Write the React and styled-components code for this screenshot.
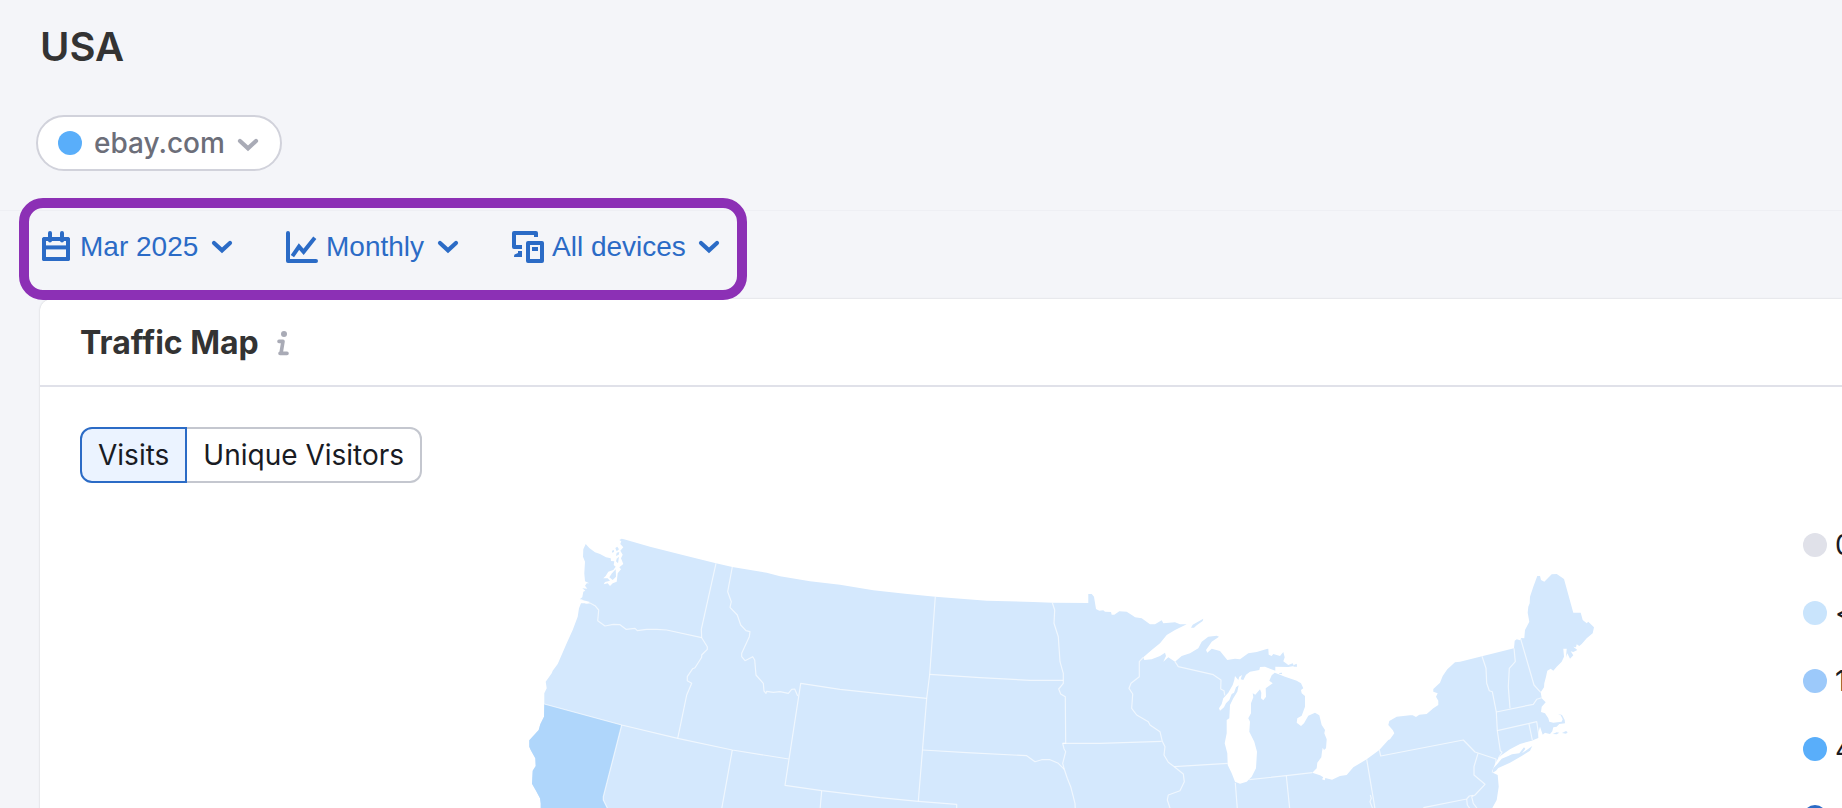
import React from "react";
import styled, { createGlobalStyle, css } from "styled-components";

const color = {
  page: "#f4f5f9",
  card: "#ffffff",
  ink: "#333333",
  text: "#191b23",
  muted: "#6c6e79",
  faint: "#a9abb6",
  link: "#2b6bc6",
  line: "#e0e1e9",
  highlight: "#8c30b5",
  land: "#d4e8fd",
  landStrong: "#afd6fb",
};

const GlobalStyle = createGlobalStyle`
  *, *::before, *::after { box-sizing: border-box; }
  body {
    margin: 0;
    background: ${color.page};
    color: ${color.text};
    font-family: Inter, "Liberation Sans", sans-serif;
    font-size: 28px;
  }
`;

const Page = styled.div`
  height: 100vh;
  overflow: hidden;
  display: flex;
  flex-direction: column;
`;

const Header = styled.header`
  display: flex;
  flex-direction: column;
  align-items: flex-start;
  gap: 44px;
  padding: 23px 36px 39px;
`;

const PageTitle = styled.h1`
  margin: 0;
  padding-left: 4px;
  color: ${color.ink};
  font-size: 40px;
  font-weight: 600;
  line-height: 48px;
`;

const Pill = styled.label`
  display: flex;
  align-items: center;
  height: 56px;
  padding: 0 22px 0 20px;
  border: 2px solid #d1d2db;
  border-radius: 28px;
  background: ${color.card};
`;

const Dot = styled.span`
  flex: none;
  width: 24px;
  height: 24px;
  border-radius: 50%;
  background: ${(p) => p.$color};
`;

const plainSelect = css`
  appearance: none;
  margin: 0;
  padding: 0;
  border: 0;
  background: none;
  font-size: 28px;
  line-height: 32px;
  cursor: pointer;
`;

const PillSelect = styled.select`
  ${plainSelect}
  margin: 0 13px 0 12px;
  color: ${color.muted};
  font-family: inherit;
  font-weight: 500;
`;

const FilterBar = styled.div`
  border-top: 1px solid #eeeff4;
  padding-left: 40px;
`;

const Filters = styled.div`
  position: relative;
  display: inline-flex;
  align-items: center;
  gap: 54px;
  height: 88px;
  padding-bottom: 16px;
  vertical-align: top;

  &::after {
    content: "";
    position: absolute;
    inset: -13px -28px -1px -21px;
    border: 10px solid ${color.highlight};
    border-radius: 24px;
    pointer-events: none;
  }
`;

const Filter = styled.label`
  display: flex;
  align-items: center;
  color: ${color.link};
`;

const FilterSelect = styled.select`
  ${plainSelect}
  margin: 0 13px 0 8px;
  color: inherit;
  font-family: "Liberation Sans", Arial, sans-serif;
`;

const Icon = styled.svg`
  flex: none;
  display: block;
  overflow: visible;
  fill: none;
  stroke: currentColor;
  stroke-width: 4;
`;

const MutedChevron = styled.span`
  color: ${color.faint};
  padding-top: 3px;
`;

const Card = styled.section`
  flex: 1;
  margin-left: 40px;
  border-radius: 12px 0 0 0;
  background: ${color.card};
  box-shadow: 0 0 2px rgba(25, 27, 35, 0.2);
`;

const CardHeader = styled.div`
  display: flex;
  align-items: center;
  gap: 18px;
  height: 88px;
  padding: 2px 40px 0;
  border-bottom: 2px solid ${color.line};
`;

const CardTitle = styled.h2`
  margin: 0;
  color: ${color.ink};
  font-size: 32px;
  font-weight: 700;
  line-height: 40px;
`;

const InfoButton = styled.button`
  display: flex;
  padding: 0;
  border: 0;
  background: none;
  color: ${color.faint};
`;

const CardBody = styled.div`
  padding: 40px 0 0 40px;
`;

const Toggle = styled.div`
  display: inline-flex;
  vertical-align: top;
`;

const ToggleButton = styled.button`
  height: 56px;
  padding: 0 16px;
  border: 2px solid ${(p) => (p.$active ? color.link : "#c4c7cf")};
  background: ${(p) => (p.$active ? "#ebf3ff" : color.card)};
  color: ${color.text};
  font: inherit;
  line-height: 32px;

  &:first-child {
    border-radius: 12px 0 0 12px;
  }
  &:last-child {
    border-left: 0;
    border-radius: 0 12px 12px 0;
  }
`;

const Chart = styled.div`
  display: flex;
  align-items: flex-start;
  margin-top: 28px;
`;

const MapArea = styled.div`
  flex: 1;
  min-width: 0;
`;

const MapSvg = styled.svg`
  display: block;
  width: 100%;
  height: auto;
`;

const Legend = styled.ul`
  flex: none;
  width: 39px;
  margin: 0;
  padding: 0;
  list-style: none;
  overflow: hidden;
`;

const LegendItem = styled.li`
  display: flex;
  align-items: center;
  gap: 8px;
  height: 68px;
  white-space: nowrap;
`;

/* ---- icons ---- */

const Chevron = () => (
  <Icon width="20" height="12" viewBox="0 0 20 12" strokeLinecap="round" aria-hidden="true">
    <path d="M2 2 10 9.4 18 2" strokeWidth="4.2" />
  </Icon>
);

const CalendarIcon = () => (
  <Icon width="32" height="32" viewBox="0 0 32 32" aria-hidden="true">
    <rect x="4" y="8" width="24" height="20" rx="0.6" />
    <rect x="3" y="7" width="26" height="22" rx="1.5" strokeWidth="2" />
    <path d="M4 16.4H28" />
    <path d="M10 2V9.6M22 2V9.6" strokeLinecap="round" />
  </Icon>
);

const TrendIcon = () => (
  <Icon width="32" height="32" viewBox="0 0 32 32" strokeLinecap="round" strokeLinejoin="round" aria-hidden="true">
    <path d="M2 2V30H30" />
    <path d="M6.4 25.2 13 15.6 17.6 20.8 28.8 6.8" strokeLinecap="butt" strokeLinejoin="miter" />
  </Icon>
);

const DevicesIcon = () => (
  <Icon width="32" height="32" viewBox="0 0 32 32" strokeLinejoin="round" aria-hidden="true">
    <path d="M24 6V2H2V16H10" />
    <rect x="16" y="12" width="14" height="18" />
    <path d="M10 20H6V22L2.6 23.4Q2 24 2 26H10Z" fill="currentColor" stroke="none" />
    <path d="M20 16H26V20H20Z" fill="currentColor" stroke="none" />
  </Icon>
);

const InfoIcon = () => (
  <Icon width="12" height="26" viewBox="0 0 12 26" strokeLinecap="round" strokeLinejoin="round" aria-hidden="true">
    <circle cx="7" cy="4" r="3" fill="currentColor" stroke="none" />
    <path d="M2 11.4H6L4 23.4M3 23.4H10" strokeWidth="3.6" />
  </Icon>
);

/* ---- map ---- */

// Each tile lists its points in thirds of a map unit from the tile's own origin.
const ORIGIN = { west: [500, 520], plains: [780, 540], lakes: [1120, 570], east: [1360, 540] };

const trace = (tile, points) => {
  const [ox, oy] = ORIGIN[tile];
  return points
    .trim()
    .split(/\s+/)
    .map((pair) => {
      const [x, y] = pair.split(",").map(Number);
      return `${(ox + x / 3).toFixed(1)},${(oy + y / 3).toFixed(1)}`;
    })
    .join(" ");
};

const LAND = [
  trace(
    "west",
    `122,890 122,850 120,835 108,812 96,791 98,752 107,738 106,715 92,690 88,680 88,661 116,630 121,613 132,590 133,552
     133,520 140,505 137,485 155,460 158,452 173,432 200,370 218,330 233,290 237,265 243,250 264,250 270,246 256,242 243,240
     241,236 247,232 250,215 256,212 247,205 262,206 255,197 260,190 268,190 255,184 253,160 255,125 249,110 250,88 257,72
     268,84 285,97 300,102 318,112 332,115 333,123 343,124 341,135 347,140 340,150 325,155 317,168 310,175 323,175 330,182
     315,186 311,193 323,190 330,198 338,190 350,185 353,160 363,148 358,142 370,132 363,115 368,104 361,92 370,82 361,72
     364,64 358,60 365,56 372,58 450,80 560,108 648,130 697,141 800,158`
  ),
  trace(
    "plains",
    `0,109 90,124 180,134 280,151 375,161 466,170 620,182 760,186 817,188 925,189 925,162 935,162 942,170 948,207 958,212
     970,211 975,215 993,216 995,224 1003,224 1018,214 1040,215 1060,228`
  ),
  trace(
    "lakes",
    `45,142 65,145 90,163 105,163 125,151 130,160 165,157 180,163 200,163 165,180 140,195 120,220 95,240 70,262 73,270 95,268
     120,258 135,248 138,258 130,275 145,262 165,275 185,258 210,250 235,235 245,215 265,200 290,197 297,200 275,215 258,240
     262,248 275,236 300,243 322,270 345,266 360,268 385,250 410,246 440,237 445,236 446,254 455,258 460,252 480,258 490,246
     494,262 490,274 505,285 518,280 522,288 505,291 466,290 466,302 450,296 435,290 420,291 418,300 390,305 378,314 370,330
     362,328 366,315 358,320 355,330 345,318 343,330 338,345 325,368 310,385 305,402 297,415 300,422 312,412 318,400 328,390
     335,372 342,368 348,352 356,346 352,365 340,385 330,405 328,445 320,450 320,490 314,520 322,550 323,585 335,610 345,635
     360,641 380,635 395,620 408,595 411,545 403,515 388,485 390,455 385,445 393,430 393,400 400,382 398,370 406,374 420,358
     424,368 423,385 430,391 438,380 437,355 458,340 448,332 455,316 464,308 484,316 495,320 530,332 543,340 550,355 543,360
     545,370 555,378 555,410 545,437 532,445 530,458 543,468 552,460 565,437 585,428 598,436 605,465 615,480 613,490 620,508
     618,535 612,540 608,533 606,545 604,562 592,578 590,595 577,608 600,616 610,622 606,628 614,631 616,624 636,629 660,618
     680,615 700,592 740,568`
  ),
  trace(
    "east",
    `58,630 85,600 90,598 103,580 98,570 85,555 88,543 110,530 150,526 158,526 168,531 178,524 200,522 220,505 235,495 235,482
     228,470 233,460 220,455 220,447 240,428 248,408 262,388 285,367 300,365 366,349 462,325 464,302 470,298 480,301 484,294
     493,295 495,270 508,245 503,218 505,200 509,190 510,170 520,140 532,108 540,108 543,120 553,125 575,103 590,102 612,117
     640,218 662,218 668,240 680,250 685,245 702,262 698,280 680,295 665,312 658,318 650,313 648,322 640,320 652,330 640,336
     632,334 640,346 630,356 622,340 618,352 620,326 610,326 612,350 605,365 590,380 580,392 572,386 562,392 558,410 553,430
     552,442 542,457 545,475 557,487 545,500 543,516 555,520 565,535 568,545 580,548 605,545 608,538 602,526 593,521 606,525
     614,540 615,550 598,552 590,560 580,562 577,574 570,582 560,580 555,578 548,584 542,566 540,560 536,575 535,594 515,602
     480,612 450,628 425,645 415,655 405,672 395,697 413,705 416,740 410,780 397,804 390,830`
  ),
].join(" ");

const CALIFORNIA = trace(
  "west",
  `133,552 132,590 121,613 116,630 88,661 88,680 92,690 106,715 107,738 98,752 96,791 108,812 120,835 122,850 122,890
   335,890 322,864 310,840 310,830 365,615`
);

const ISLANDS = [
  trace("west", "346,84 352,80 357,88 350,94"),
  trace("west", "350,98 358,96 356,104 348,108"),
  trace("west", "350,116 357,110 354,130 348,124"),
  trace("west", "336,92 342,90 342,96 336,98"),
  trace("west", "336,160 347,148 348,170 338,180 328,172"),
  trace("lakes", "213,173 218,164 250,146 248,153 230,166 222,173"),
  trace("lakes", "523,284 530,281 531,290 520,290"),
  trace("lakes", "478,309 486,308 486,312 478,312"),
  trace("east", "397,699 400,685 412,672 425,656 445,648 456,643 478,640 492,622 496,626 486,640 500,630 517,618 510,632 485,648 450,668 415,684 408,692"),
  trace("east", "578,582 590,577 598,578 590,583"),
  trace("east", "606,579 618,573 623,577 618,581"),
];

const BORDERS = [
  trace("west", "243,238 258,250 270,249 285,257 296,270 293,302 315,318 340,313 360,314 378,328 405,325 412,332 440,328 470,328 500,330 605,353"),
  trace("west", "648,130 604,328 605,353 622,380 622,388 605,405 605,412 585,443 578,446 562,470 562,482 575,490 560,525 533,655"),
  trace("west", "697,141 683,215 694,245 690,262 712,285 722,315 738,332 750,335 748,350 725,400 725,410 735,422 758,410 764,420 768,465 790,490 792,513 798,520 800,514 820,517 840,515 865,520 875,508 884,507 893,528"),
  trace("west", "133,552 365,615 533,655 697,690 866,717"),
  trace("west", "365,615 310,830 310,840 322,864"),
  trace("west", "697,690 665,866"),
  trace("plains", "440,475 300,461 180,448 62,430 15,736 125,752 300,773 415,784 530,793 530,810"),
  trace("plains", "466,170 449,403 440,475 415,784"),
  trace("plains", "125,752 120,810"),
  trace("plains", "449,403 600,413 750,421 850,421"),
  trace("plains", "428,630 560,638 740,647 765,665 785,659 810,659 835,670 853,688"),
  trace("plains", "817,188 824,210 822,250 835,290 840,365 850,400 850,430 836,447 842,462 856,470 857,610 848,610 852,626 857,635 848,670 853,688 862,715 872,740 885,790 886,810"),
  trace("plains", "848,610 960,610 1145,604"),
  trace("lakes", "70,262 58,275 58,320 33,340 27,355 38,372 35,415 50,435 85,455 90,465 120,485 127,514 135,530 132,555 145,577 163,590 190,612 193,635 180,662 145,675 142,690 150,714"),
  trace("lakes", "163,590 323,580"),
  trace("lakes", "346,638 352,716"),
  trace("lakes", "388,629 499,617 577,608"),
  trace("lakes", "499,617 509,716"),
  trace("lakes", "165,275 175,290 280,314 303,330 302,357 312,362 314,376"),
  trace("lakes", "740,568 765,716"),
  trace("east", "31,765 34,775 30,785 38,806"),
  trace("east", "58,630 62,648 310,600 345,636 408,657 407,675"),
  trace("east", "354,640 342,680 342,705 375,733 345,765 335,770 340,790 352,806"),
  trace("east", "190,803 320,777 328,768 340,766"),
  trace("east", "320,777 322,795 330,806"),
  trace("east", "366,349 378,385 380,430 388,452 397,455 409,516 412,572 421,632 426,637 415,655"),
  trace("east", "462,325 466,365 448,385 445,440 450,505"),
  trace("east", "409,516 520,493 530,478 545,473"),
  trace("east", "482,297 522,435 542,457"),
  trace("east", "412,572 530,545 537,590"),
  trace("east", "507,552 517,600"),
];

const TrafficMap = () => (
  <MapSvg viewBox="80 511 1723 297" role="img" aria-label="Traffic map of the USA">
    <polygon points={LAND} fill={color.land} />
    <polygon points={CALIFORNIA} fill={color.landStrong} />
    {ISLANDS.map((points) => (
      <polygon key={points} points={points} fill={color.land} />
    ))}
    {BORDERS.map((points) => (
      <polyline key={points} points={points} fill="none" stroke="#ffffff" strokeOpacity="0.65" strokeWidth="1.2" strokeLinejoin="round" />
    ))}
  </MapSvg>
);

const FILTERS = [
  { name: "Period", value: "Mar 2025", icon: CalendarIcon },
  { name: "Granularity", value: "Monthly", icon: TrendIcon },
  { name: "Device type", value: "All devices", icon: DevicesIcon },
];

const LEGEND = [
  { label: "0", color: "#e0e1e9" },
  { label: "<", color: "#c9e4fc" },
  { label: "1", color: "#9cc9fa" },
  { label: "4", color: "#59aefa" },
  { label: "", color: "#2b6bc6" },
];

export default function App() {
  const [metric, setMetric] = React.useState("Visits");

  return (
    <>
      <GlobalStyle />
      <Page>
        <Header>
          <PageTitle>USA</PageTitle>
          <Pill>
            <Dot $color="#59aefa" />
            <PillSelect aria-label="Domain">
              <option>ebay.com</option>
            </PillSelect>
            <MutedChevron>
              <Chevron />
            </MutedChevron>
          </Pill>
        </Header>
        <FilterBar>
          <Filters>
            {FILTERS.map(({ name, value, icon: FilterIcon }) => (
              <Filter key={name}>
                <FilterIcon />
                <FilterSelect aria-label={name}>
                  <option>{value}</option>
                </FilterSelect>
                <Chevron />
              </Filter>
            ))}
          </Filters>
        </FilterBar>
        <Card>
          <CardHeader>
            <CardTitle>Traffic Map</CardTitle>
            <InfoButton type="button" aria-label="About this map">
              <InfoIcon />
            </InfoButton>
          </CardHeader>
          <CardBody>
            <Toggle role="group" aria-label="Metric">
              {["Visits", "Unique Visitors"].map((name) => (
                <ToggleButton
                  key={name}
                  type="button"
                  $active={metric === name}
                  aria-pressed={metric === name}
                  onClick={() => setMetric(name)}
                >
                  {name}
                </ToggleButton>
              ))}
            </Toggle>
            <Chart>
              <MapArea>
                <TrafficMap />
              </MapArea>
              <Legend>
                {LEGEND.map((item) => (
                  <LegendItem key={item.color}>
                    <Dot $color={item.color} />
                    {item.label}
                  </LegendItem>
                ))}
              </Legend>
            </Chart>
          </CardBody>
        </Card>
      </Page>
    </>
  );
}
